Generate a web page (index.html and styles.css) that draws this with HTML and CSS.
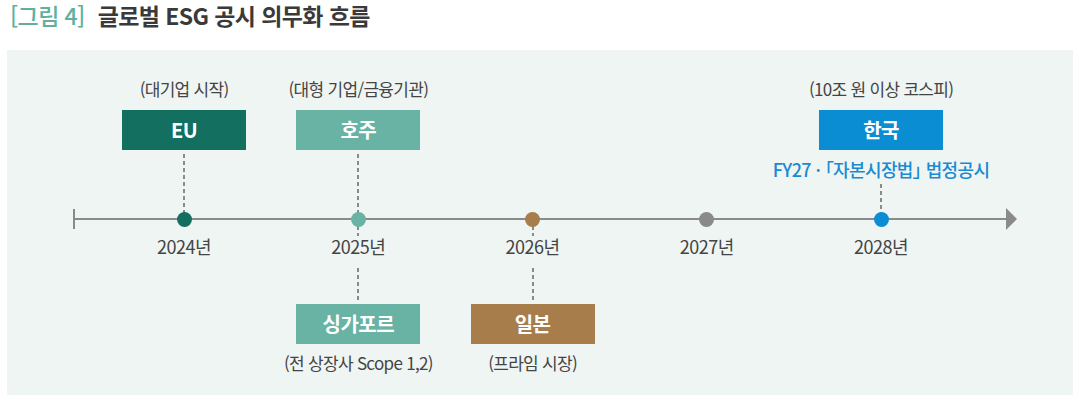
FILE: index.html
```html
<!DOCTYPE html>
<html lang="ko">
<head>
<meta charset="utf-8">
<title>글로벌 ESG 공시 의무화 흐름</title>
<link rel="stylesheet" href="styles.css">
</head>
<body>
<h1 class="title"><span class="fig-no">[그림 4]</span><span class="fig-name">글로벌 ESG 공시 의무화 흐름</span></h1>
<section class="panel">
  <div class="timeline">
    <!-- axis -->
    <div class="axis"><span class="axis-tick"></span><span class="axis-line"></span><span class="axis-arrow"></span></div>

    <!-- 2024 EU -->
    <div class="cell c2 r-label-top"><span class="note">(대기업 시작)</span></div>
    <div class="box box-top c2 eu">EU</div>
    <div class="dash dash-top c2"></div>
    <div class="dot c2 dot-eu"></div>
    <div class="cell c2 r-year"><span class="year">2024년</span></div>

    <!-- 2025 호주 / 싱가포르 -->
    <div class="cell c3 r-label-top"><span class="note">(대형 기업/금융기관)</span></div>
    <div class="box box-top c3 au">호주</div>
    <div class="dash dash-top c3"></div>
    <div class="dash dash-bottom c3"></div>
    <div class="dot c3 dot-au"></div>
    <div class="cell c3 r-year"><span class="year">2025년</span></div>
    <div class="box box-bottom c3 sg">싱가포르</div>
    <div class="cell c3 r-label-bottom"><span class="note">(전 상장사 Scope 1,2)</span></div>

    <!-- 2026 일본 -->
    <div class="dash dash-bottom c4"></div>
    <div class="dot c4 dot-jp"></div>
    <div class="cell c4 r-year"><span class="year">2026년</span></div>
    <div class="box box-bottom c4 jp">일본</div>
    <div class="cell c4 r-label-bottom"><span class="note">(프라임 시장)</span></div>

    <!-- 2027 -->
    <div class="dot c5 dot-gray"></div>
    <div class="cell c5 r-year"><span class="year">2027년</span></div>

    <!-- 2028 한국 -->
    <div class="cell c6 r-label-top"><span class="note">(10조 원 이상 코스피)</span></div>
    <div class="box box-top c6 kr">한국</div>
    <div class="cell c6 r-sub"><span class="sub-kr">FY27 · 「자본시장법」 법정공시</span></div>
    <div class="dash dash-top dash-kr c6"></div>
    <div class="dot c6 dot-kr"></div>
    <div class="cell c6 r-year"><span class="year">2028년</span></div>
  </div>
</section>
</body>
</html>
```

FILE: styles.css
```css
html, body {
  margin: 0;
  padding: 0;
  background: #ffffff;
}

body {
  font-family: "Noto Sans CJK KR", "Noto Sans", sans-serif;
  color: #444444;
  width: 1080px;
  height: 401px;
  overflow: hidden;
}

.title {
  margin: 0;
  height: 50px;
  padding-left: 10px;
  display: flex;
  align-items: flex-start;
  font-size: 23px;
  line-height: 30px;
  letter-spacing: -0.6px;
}

.fig-no {
  color: #62af9f;
  font-weight: 500;
}

.fig-name {
  color: #3a3a3a;
  font-weight: 700;
  margin-left: 13px;
}

.panel {
  margin: 0 7px;
  background: #eff5f3;
  padding: 28px 0 21px 66px;
}

.timeline {
  display: grid;
  grid-template-columns: 24px repeat(5, 174.25px) 48.75px;
  grid-template-rows: 22px 50px 56px 26px 32px 40px 40px 30px;
}

.c2 { grid-column: 2; }
.c3 { grid-column: 3; }
.c4 { grid-column: 4; }
.c5 { grid-column: 5; }
.c6 { grid-column: 6; }

.cell {
  display: flex;
  justify-content: center;
  white-space: nowrap;
}

.r-label-top { grid-row: 1; }
.r-sub { grid-row: 3; padding-top: 8px; position: relative; z-index: 2; }
.r-year { grid-row: 5; position: relative; z-index: 2; align-items: flex-start; }
.r-label-bottom { grid-row: 8; padding-top: 8px; }

.note {
  font-size: 17px;
  line-height: 22px;
  letter-spacing: -0.7px;
  color: #444444;
}

.year {
  display: block;
  margin-top: 4px;
  padding: 0 2px 9px;
  background: #eff5f3;
  font-size: 18px;
  line-height: 20px;
  letter-spacing: -0.5px;
  color: #444444;
}

.sub-kr {
  font-size: 18px;
  line-height: 22px;
  font-weight: 500;
  letter-spacing: -0.6px;
  font-feature-settings: "palt" 1;
  color: #1a8bd0;
}

.box {
  justify-self: center;
  width: 124px;
  height: 40px;
  line-height: 40px;
  text-align: center;
  color: #ffffff;
  font-size: 20px;
  font-weight: 700;
  letter-spacing: -0.5px;
}

.box-top { grid-row: 2; margin-top: 10px; }
.box-bottom { grid-row: 7; }

.eu { background: #136f5f; }
.au, .sg { background: #68b3a3; }
.jp { background: #a77e4b; }
.kr { background: #0a8dd2; }

.dash {
  justify-self: center;
  width: 2px;
  background: repeating-linear-gradient(to bottom, #8a8a8a 0 4px, transparent 4px 7px);
}

.dash-top { grid-row: 3 / 5; margin: 4px 0 13px; }
.dash-kr { margin-top: 34px; }
.dash-bottom { grid-row: 4 / 7; margin: 13px 0 1px; }

.axis {
  grid-column: 1 / -1;
  grid-row: 4;
  display: flex;
  align-items: center;
}

.axis-tick {
  width: 2px;
  height: 20px;
  background: #8a8a8a;
}

.axis-line {
  flex: 1;
  height: 2px;
  background: #8a8a8a;
}

.axis-arrow {
  width: 0;
  height: 0;
  border-left: 11px solid #8a8a8a;
  border-top: 11px solid transparent;
  border-bottom: 11px solid transparent;
}

.dot {
  grid-row: 4;
  justify-self: center;
  align-self: center;
  width: 15px;
  height: 15px;
  border-radius: 50%;
  position: relative;
  z-index: 1;
}

.dot-eu { background: #136f5f; }
.dot-au { background: #68b3a3; }
.dot-jp { background: #a77e4b; }
.dot-gray { background: #8a8a8a; }
.dot-kr { background: #0a8dd2; }
```
